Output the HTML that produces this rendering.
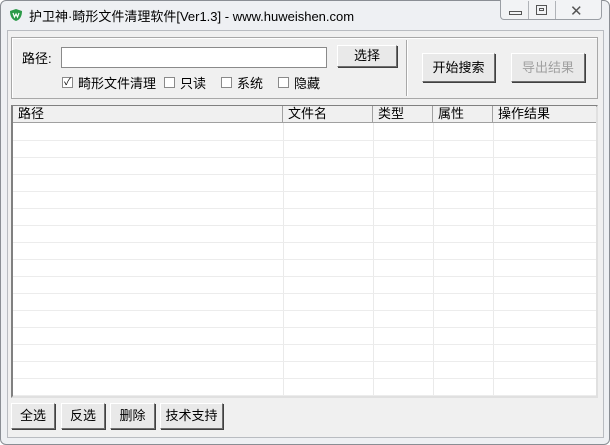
<!DOCTYPE html>
<html><head><meta charset="utf-8"><style>
*{margin:0;padding:0;box-sizing:border-box}
body{width:610px;height:445px;overflow:hidden;background:#fff;font-family:"Liberation Sans","Noto Sans CJK SC",sans-serif;font-size:12px;color:#000;position:relative}
.a{position:absolute}
.frame{left:0;top:0;width:610px;height:445px;background:#eef0f3;border:1px solid #8a8e94;border-radius:6px}
.client{left:7px;top:30px;width:597px;height:408px;background:#f0f0f0;border:1px solid #b9bcc1}
.btn{position:absolute;background:#e9e9e9;border:1px solid;border-color:#fff #6e6e6e #6e6e6e #fff;box-shadow:1px 1px 0 #404040;text-align:center;font-size:13px}
.cb{position:absolute;width:11px;height:11px;border:1px solid #8a8a8a;background:#fff;top:77px}
.lbl{position:absolute;top:73px;font-size:13px}
.hd{position:absolute;top:106px;height:17px;border-right:1px solid #a0a0a0;font-size:13px;line-height:16px;padding-left:5px}
</style></head><body>
<div class="a frame"></div>
<svg class="a" style="left:9px;top:8px" width="14" height="14"><path d="M7 1 L13 3 Q13 11 7 13 Q1 11 1 3Z" fill="#2b9a48"/><path d="M4 5 L5.5 9 L7 6 L8.5 9 L10 5" stroke="#fff" stroke-width="1.2" fill="none"/></svg>
<div class="a" style="left:29px;top:6px;font-size:13px">护卫神·畸形文件清理软件[Ver1.3] - www.huweishen.com</div>
<div class="a" style="left:500px;top:0;width:102px;height:20px;border:1px solid #9a9ea4;border-top:none;border-radius:0 0 4px 4px;background:#f2f3f5"></div>
<div class="a" style="left:528px;top:1px;width:1px;height:18px;background:#b0b3b8"></div>
<div class="a" style="left:555px;top:1px;width:1px;height:18px;background:#b0b3b8"></div>
<div class="a" style="left:509px;top:11px;width:13px;height:4px;border:1px solid #555"></div>
<div class="a" style="left:536px;top:5px;width:11px;height:10px;border:1px solid #555"><div style="margin:2px;height:3px;border:1px solid #555"></div></div>
<div class="a" style="left:570px;top:2px;font-size:15px;color:#555">✕</div>
<div class="a client"></div>
<div class="a" style="left:11px;top:37px;width:587px;height:62px;border:1px solid #a8a8a8;box-shadow:inset 1px 1px 0 #fff"></div>
<div class="a" style="left:406px;top:40px;width:2px;height:56px;border-left:1px solid #a8a8a8;border-right:1px solid #fff"></div>
<div class="a" style="left:22px;top:48px;font-size:13px">路径:</div>
<div class="a" style="left:61px;top:47px;width:266px;height:21px;background:#fff;border:1px solid #8a8a8a"></div>
<div class="btn" style="left:337px;top:45px;width:60px;height:22px;line-height:20px">选择</div>
<div class="btn" style="left:422px;top:53px;width:73px;height:29px;line-height:27px">开始搜索</div>
<div class="btn" style="left:511px;top:53px;width:74px;height:29px;line-height:27px;color:#a0a0a0">导出结果</div>
<div class="cb" style="left:62px;font-size:10px;line-height:9px;text-align:center">✓</div><div class="lbl" style="left:78px">畸形文件清理</div>
<div class="cb" style="left:164px"></div><div class="lbl" style="left:180px">只读</div>
<div class="cb" style="left:221px"></div><div class="lbl" style="left:237px">系统</div>
<div class="cb" style="left:278px"></div><div class="lbl" style="left:294px">隐藏</div>
<div class="a" style="left:11px;top:105px;width:587px;height:293px;border:2px solid;border-color:#808080 #e0e0e0 #e0e0e0 #808080;background:#fff;
background-image:linear-gradient(#eaeaea,#eaeaea),linear-gradient(90deg,transparent 270px,#eaeaea 270px,#eaeaea 271px,transparent 271px,transparent 360px,#eaeaea 360px,#eaeaea 361px,transparent 361px,transparent 420px,#eaeaea 420px,#eaeaea 421px,transparent 421px,transparent 480px,#eaeaea 480px,#eaeaea 481px,transparent 481px);background-size:100% 0,100% 100%"></div>
<div class="a" style="left:13px;top:124px;width:583px;height:272px;background:repeating-linear-gradient(transparent 0,transparent 16px,#ececec 16px,#ececec 17px)"></div>
<div class="a" style="left:13px;top:106px;width:583px;height:17px;background:#f0f0f0;border-bottom:1px solid #a0a0a0"></div>
<div class="hd" style="left:13px;width:270px">路径</div>
<div class="hd" style="left:283px;width:90px">文件名</div>
<div class="hd" style="left:373px;width:60px">类型</div>
<div class="hd" style="left:433px;width:60px">属性</div>
<div class="hd" style="left:493px;width:103px;border-right:none">操作结果</div>
<div class="btn" style="left:11px;top:403px;width:44px;height:26px;line-height:24px">全选</div>
<div class="btn" style="left:61px;top:403px;width:44px;height:26px;line-height:24px">反选</div>
<div class="btn" style="left:110px;top:403px;width:45px;height:26px;line-height:24px">删除</div>
<div class="btn" style="left:160px;top:403px;width:63px;height:26px;line-height:24px">技术支持</div>
</body></html>
